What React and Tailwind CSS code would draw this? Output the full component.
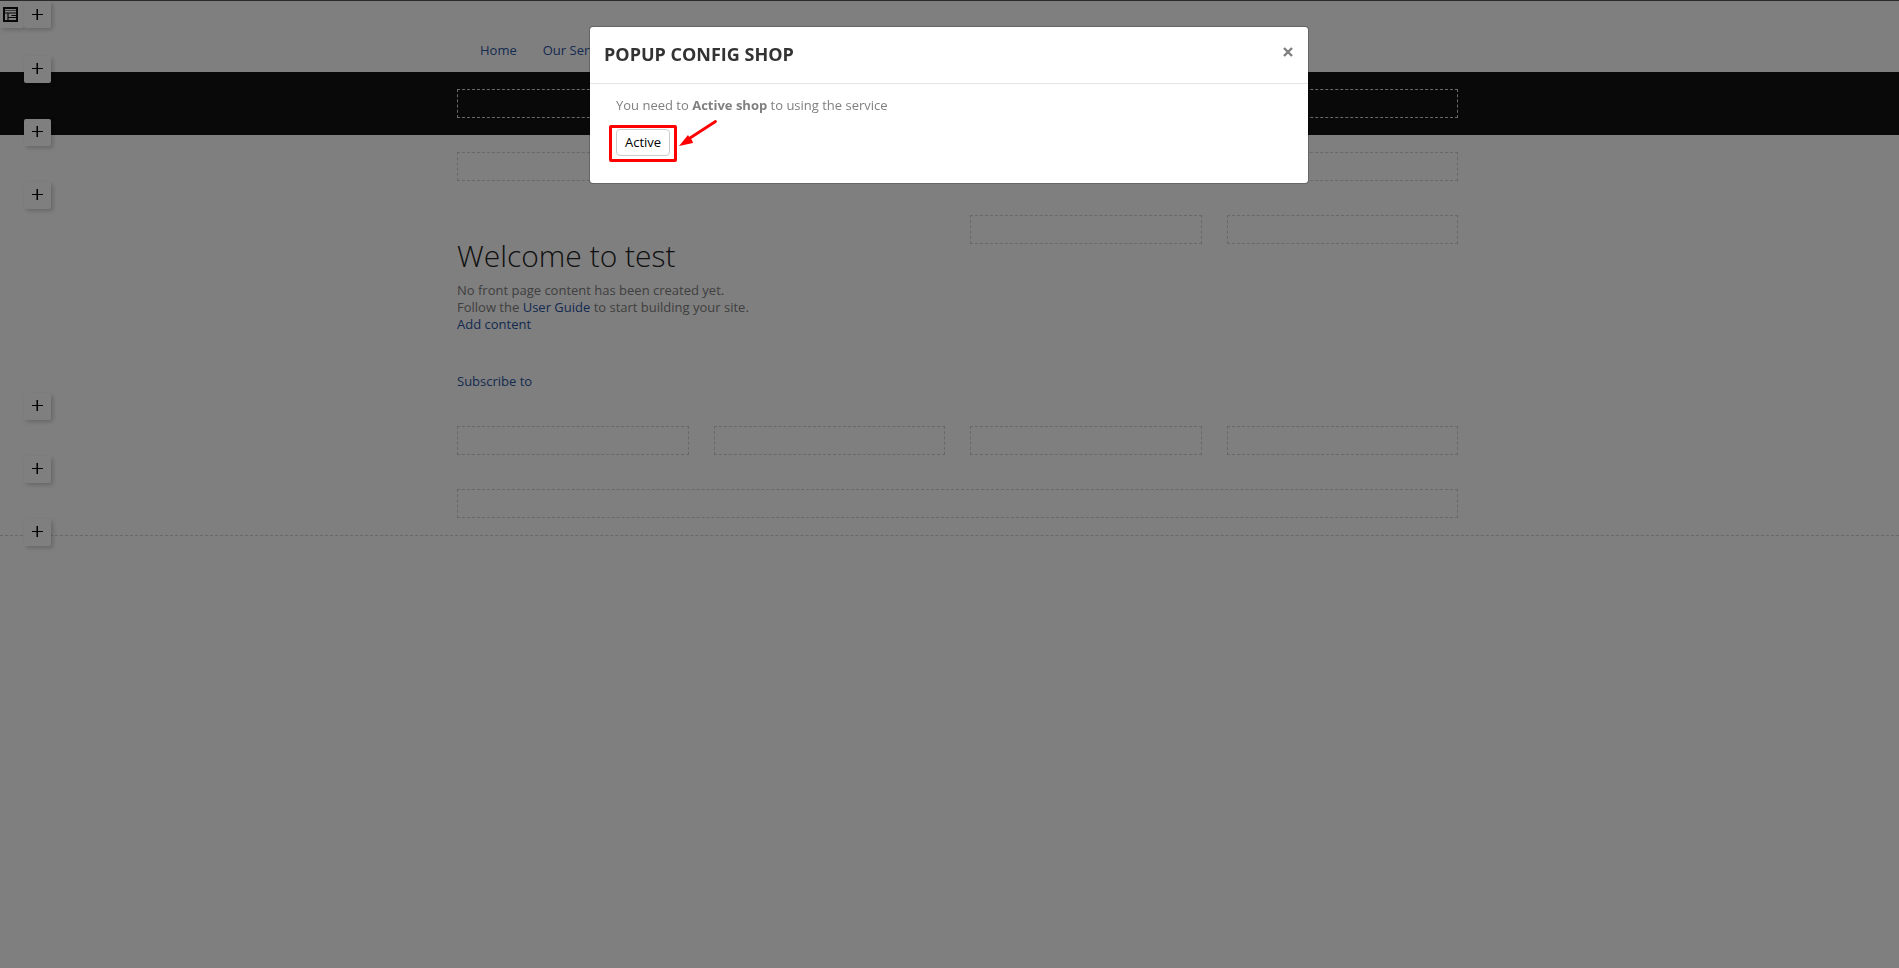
import React, { useState } from 'react';

const LayoutIcon = () => (
  <svg width="15" height="15" viewBox="0 0 15 15" fill="none" stroke="#111" className="shrink-0" aria-hidden="true">
    <path d="M1 1h13v13H1z" strokeWidth="2" />
    <path d="M1 3.500h13" strokeWidth="1" opacity="0.6" />
    <path d="M1 6h13M5 6v8M5 10.500h9M8.500 8.500h5.500" strokeWidth="1.2" />
  </svg>
);

const PlusIcon = () => (
  <svg width="11" height="11" viewBox="0 0 11 11" aria-hidden="true">
    <path d="M0 5h11v1H0z" fill="#000" />
    <path d="M5 0h1v11H5z" fill="#000" />
    <path d="M4 0h1v11H4z" fill="#000" opacity="0.5" />
  </svg>
);

const AddButton = ({ label, className = '-top-4' }) => (
  <button
    type="button"
    aria-label={label}
    className={`absolute left-6 z-10 flex h-[27px] w-[27px] justify-center rounded-xs bg-white pt-[7px] shadow-[2px_2px_4px_rgba(0,0,0,0.2)] ${className}`}
  >
    <PlusIcon />
  </button>
);

const Slot = ({ className = '' }) => (
  <div className={`h-[29px] border border-dashed border-[#d0d0d0] ${className}`} />
);

const Row = ({ label, className = '', children }) => (
  <section className={`relative py-[17px] pl-4 ${className}`}>
    <AddButton label={label} />
    <div className="mx-auto max-w-[1001px]">{children}</div>
  </section>
);

const SitePage = () => (
  <div className="text-[13px] leading-[17px] text-[#808080]">
    <header className="relative h-[72px] border-t border-[#555] pl-4">
      <button
        type="button"
        aria-label="Layout"
        className="absolute left-0 top-0 flex h-[27px] w-6 rounded-xs bg-white pl-[3px] pt-[6px] shadow-[2px_2px_4px_rgba(0,0,0,0.2)]"
      >
        <LayoutIcon />
      </button>
      <AddButton label="Add header section" className="top-0 pt-[8px]" />
      <nav className="mx-auto flex max-w-[1001px] gap-[26px] pl-[23px] pt-[41px] text-[#2a55a0]">
        <a href="#home">Home</a>
        <a href="#services">Our Services</a>
      </nav>
    </header>

    <Row label="Add section before banner" className="bg-[#121212]">
      <Slot />
    </Row>
    <Row label="Add section before top">
      <Slot />
    </Row>
    <Row label="Add section before content">
      <div className="grid grid-cols-4 gap-[25px]">
        <main className="col-span-2 h-[177px] pt-[23px]">
          <h1 className="text-[30px] leading-9 font-light text-[#222]">Welcome to test</h1>
          <p className="mt-2">No front page content has been created yet.</p>
          <p>
            Follow the <a href="#guide" className="text-[#2a55a0]">User Guide</a> to start building your site.
          </p>
          <a href="#add" className="block text-[#2a55a0]">Add content</a>
          <a href="#feed" className="mt-10 block text-[#2a55a0]">Subscribe to</a>
        </main>
        <Slot />
        <Slot />
      </div>
    </Row>
    <Row label="Add section before bottom">
      <div className="grid grid-cols-4 gap-[25px]">
        <Slot />
        <Slot />
        <Slot />
        <Slot />
      </div>
    </Row>
    <Row label="Add section before footer">
      <Slot />
    </Row>
    <footer className="relative border-t border-dashed border-[#d0d0d0]">
      <AddButton label="Add footer section" className="-top-[17px]" />
    </footer>
  </div>
);

const ShopDialog = ({ onClose }) => (
  <div className="fixed inset-0 z-20 bg-black/50 pt-[26px] pr-px">
    <div
      role="dialog"
      aria-modal="true"
      aria-labelledby="dialog-title"
      className="mx-auto max-w-[720px] rounded-sm border border-black/20 bg-white bg-clip-padding pb-[27px]"
    >
      <div className="flex items-start justify-between border-b border-[#e5e5e5] px-[14px] pt-[15px] pb-4">
        <h2 id="dialog-title" className="text-[18px] leading-[25px] font-bold text-[#333]">POPUP CONFIG SHOP</h2>
        <button type="button" aria-label="Close" onClick={onClose} className="mt-[5px] mr-[1px]">
          <svg width="10" height="10" viewBox="0 0 10 10" stroke="#7f7f7f" strokeWidth="2.4" aria-hidden="true">
            <path d="M1 1l8 8M9 1l-8 8" />
          </svg>
        </button>
      </div>
      <div className="px-[26px] pt-[13px] text-[13px] leading-[17px] text-[#808080]">
        <p>
          You need to <strong className="font-bold">Active shop</strong> to using the service
        </p>
        <div className="mt-[15px] flex">
          <div className="relative">
            <button
              type="button"
              className="block h-[27px] rounded-sm border border-[#ccc] bg-white px-2 text-[13px] text-black"
            >
              Active
            </button>
            <div className="pointer-events-none absolute -inset-x-[7px] -top-1 -bottom-[6px] rounded-xs border-3 border-[#f00]" />
            <svg
              className="pointer-events-none absolute -top-[10px] left-[62px]"
              width="40"
              height="30"
              viewBox="0 0 40 30"
              aria-hidden="true"
            >
              <path d="M37.500 2.500L12 19" stroke="#f00" strokeWidth="2.8" strokeLinecap="round" />
              <path d="M1 27L10 16L11.500 18.500L14 21L15 24Z" fill="#f00" />
            </svg>
          </div>
        </div>
      </div>
    </div>
  </div>
);

export default function App() {
  const [open, setOpen] = useState(true);

  return (
    <div className="min-h-screen bg-white font-['Open_Sans',sans-serif]">
      <SitePage />
      {open && <ShopDialog onClose={() => setOpen(false)} />}
    </div>
  );
}
